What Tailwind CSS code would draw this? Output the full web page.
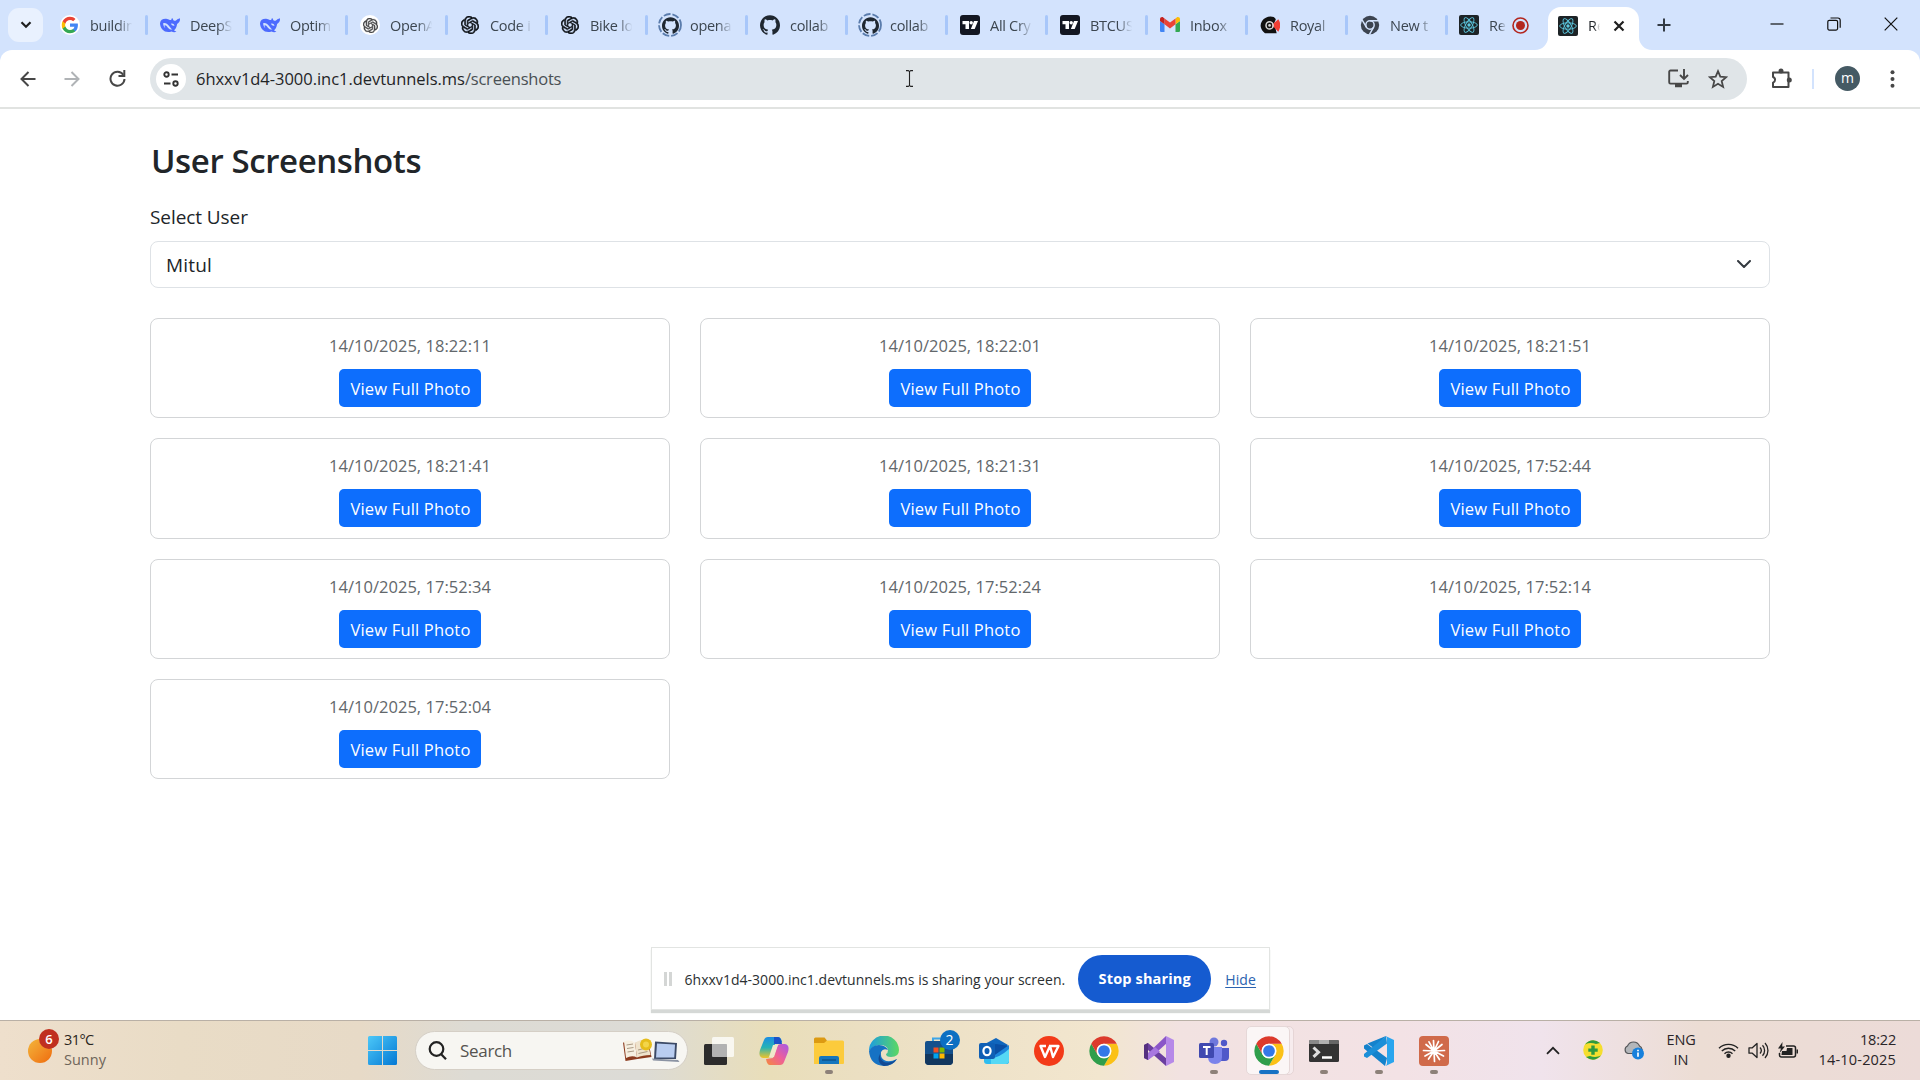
<!DOCTYPE html>
<html lang="en">
<head>
<meta charset="utf-8">
<title>User Screenshots</title>
<script src="https://cdn.jsdelivr.net/npm/@tailwindcss/browser@4"></script>
</head>
<body class="w-[1920px] h-[1080px] overflow-hidden bg-white flex flex-col font-['Open_Sans',sans-serif] text-[#212529]">

<svg class="hidden">
  <symbol id="google" viewBox="0 0 48 48"><path fill="#4285f4" d="M45.1 24.5c0-1.6-.1-3.1-.4-4.5H24v8.500h11.800c-.5 2.800-2.100 5.100-4.400 6.700v5.500h7.100c4.200-3.800 6.600-9.500 6.600-16.200z"/><path fill="#34a853" d="M24 46c5.900 0 10.900-2 14.500-5.300l-7.100-5.500c-2 1.300-4.500 2.100-7.400 2.100-5.700 0-10.600-3.900-12.300-9.100H4.300v5.700C8 41.100 15.400 46 24 46z"/><path fill="#fbbc05" d="M11.700 28.200c-.4-1.300-.7-2.700-.7-4.200s.3-2.900.7-4.200v-5.700H4.300C2.900 17.100 2 20.400 2 24s.9 6.900 2.300 9.900z"/><path fill="#ea4335" d="M24 10.700c3.200 0 6.100 1.100 8.400 3.300l6.300-6.300C34.900 4.200 29.900 2 24 2 15.400 2 8 6.900 4.300 14.100l7.400 5.700c1.700-5.200 6.600-9.100 12.300-9.100z"/></symbol>
  <symbol id="deepseek" viewBox="0 0 24 24"><path fill="#4d6bfe" d="M0 10C.5 5.500 4 4 8.500 4.700c2 .3 3 1.300 4.600 1.300.7 0 .4-1.500 1.400-2.500 1 .5.900 2 1.900 3 1 .8 2.200.5 3.100-.2.900-.8 2.500-1.800 4.500-2.300.2 3.100-.8 5.500-3.500 6.700-.5 3.800-1.900 6.100-3.600 7.600.7.900 1.700 1.200 2.900 1.600-2 1.200-4.300.9-5.900-.1C6.500 22.500.2 17.500 0 10z"/><path fill="#d3e3fd" d="M3.800 9.800c2.700-.8 5 .7 7.100 3.500 1.300 1.800 2.600 3.500 4.100 4.100-2.200.3-4-.5-5.500-2.200-1.500-1.600-1.700-3.100-3.900-3-.3 1.300.1 2.500 1.100 3.500-1.700-.9-3-3.300-2.900-5.900z"/><path fill="#d3e3fd" d="M13 10.500q3-1 4.500 2-2.500 1.200-4.500-2z"/></symbol>
  <symbol id="openai" viewBox="0 0 24 24"><path fill="currentColor" stroke="currentColor" stroke-width=".7" d="M22.2819 9.8211a5.9847 5.9847 0 0 0-.5157-4.9108 6.0462 6.0462 0 0 0-6.5098-2.9A6.0651 6.0651 0 0 0 4.9807 4.1818a5.9847 5.9847 0 0 0-3.9977 2.9 6.0462 6.0462 0 0 0 .7427 7.0966 5.98 5.98 0 0 0 .511 4.9107 6.051 6.051 0 0 0 6.5146 2.9001A5.9847 5.9847 0 0 0 13.2599 24a6.0557 6.0557 0 0 0 5.7718-4.2058 5.9894 5.9894 0 0 0 3.9977-2.9001 6.0557 6.0557 0 0 0-.7475-7.0729zm-9.022 12.6081a4.4755 4.4755 0 0 1-2.8764-1.0408l.1419-.0804 4.7783-2.7582a.7948.7948 0 0 0 .3927-.6813v-6.7369l2.02 1.1686a.071.071 0 0 1 .038.052v5.5826a4.504 4.504 0 0 1-4.4945 4.4944zm-9.6607-4.1254a4.4708 4.4708 0 0 1-.5346-3.0137l.142.0852 4.783 2.7582a.7712.7712 0 0 0 .7806 0l5.8428-3.3685v2.3324a.0804.0804 0 0 1-.0332.0615L9.74 19.9502a4.4992 4.4992 0 0 1-6.1408-1.6464zM2.3408 7.8956a4.485 4.485 0 0 1 2.3655-1.9728V11.6a.7664.7664 0 0 0 .3879.6765l5.8144 3.3543-2.0201 1.1685a.0757.0757 0 0 1-.071 0l-4.8303-2.7865A4.504 4.504 0 0 1 2.3408 7.872zm16.5963 3.8558L13.1038 8.364 15.1192 7.2a.0757.0757 0 0 1 .071 0l4.8303 2.7913a4.4944 4.4944 0 0 1-.6765 8.1042v-5.6772a.79.79 0 0 0-.407-.667zm2.0107-3.0231l-.142-.0852-4.7735-2.7818a.7759.7759 0 0 0-.7854 0L9.409 9.2297V6.8974a.0662.0662 0 0 1 .0284-.0615l4.8303-2.7866a4.4992 4.4992 0 0 1 6.6802 4.66zM8.3065 12.863l-2.02-1.1638a.0804.0804 0 0 1-.038-.0567V6.0742a4.4992 4.4992 0 0 1 7.3757-3.4537l-.142.0805L8.704 5.459a.7948.7948 0 0 0-.3927.6813zm1.0976-2.3654l2.602-1.4998 2.6069 1.4998v2.9994l-2.5974 1.4997-2.6067-1.4997Z"/></symbol>
  <symbol id="github" viewBox="0 0 24 24"><path fill="#1f2730" d="M12 .297c-6.63 0-12 5.373-12 12 0 5.303 3.438 9.8 8.205 11.385.6.113.82-.258.82-.577 0-.285-.01-1.04-.015-2.04-3.338.724-4.042-1.61-4.042-1.61C4.422 18.07 3.633 17.7 3.633 17.7c-1.087-.744.084-.729.084-.729 1.205.084 1.838 1.236 1.838 1.236 1.07 1.835 2.809 1.305 3.495.998.108-.776.417-1.305.76-1.605-2.665-.3-5.466-1.332-5.466-5.93 0-1.31.465-2.38 1.235-3.22-.135-.303-.54-1.523.105-3.176 0 0 1.005-.322 3.3 1.23.96-.267 1.98-.399 3-.405 1.02.006 2.04.138 3 .405 2.28-1.552 3.285-1.23 3.285-1.23.645 1.653.24 2.873.12 3.176.765.84 1.23 1.91 1.23 3.22 0 4.61-2.805 5.625-5.475 5.92.42.36.81 1.096.81 2.22 0 1.606-.015 2.896-.015 3.286 0 .315.21.69.825.57C20.565 22.092 24 17.592 24 12.297c0-6.627-5.373-12-12-12"/></symbol>
  <symbol id="tradingview" viewBox="0 0 20 20"><rect width="20" height="20" rx="3" fill="#131722"/><path fill="#fff" d="M2.500 6h6.500v8H5.500V9.300H2.500zM14 6h4l-3.300 8h-3.800z"/><circle cx="11.200" cy="7.700" r="1.700" fill="#fff"/></symbol>
  <symbol id="gmail" viewBox="0 0 24 24"><path fill="#4285f4" d="M1.600 20.500h3.800v-9.300L0 7.100v11.800c0 .9.700 1.600 1.600 1.600z"/><path fill="#34a853" d="M18.600 20.500h3.800c.9 0 1.600-.7 1.600-1.600V7.100l-5.400 4.100z"/><path fill="#fbbc04" d="M18.600 4.200v7L24 7.100V5c0-2-2.300-3.200-3.900-2z"/><path fill="#ea4335" d="M5.400 11.200v-7L12 9.100l6.600-4.900v7L12 16.100z"/><path fill="#c5221f" d="M0 5v2.100l5.400 4.100v-7L3.900 3C2.300 1.800 0 3 0 5z"/></symbol>
  <symbol id="royal" viewBox="0 0 24 24"><path fill="#111" d="M4 20C-2 14 1 6 7 3.200c4-2 10-2 12 1.800l-2 5 3 12H6z"/><path fill="#ef3e33" d="m14 12 8-7c3 4 3 10 0 15z"/><circle cx="11.500" cy="12.500" r="4.300" fill="none" stroke="#d8d8d8" stroke-width="1.800"/><circle cx="11.500" cy="12.500" r="1.600" fill="#d8d8d8"/></symbol>
  <symbol id="chromegray" viewBox="0 0 48 48"><circle cx="24" cy="24" r="22" fill="#3c4450"/><g fill="none" stroke="#d3e3fd" stroke-width="3.500"><circle cx="24" cy="24" r="10"/><path d="M24 14h21M15.300 29 5 11.500M32.700 29 22.500 47"/></g></symbol>
  <symbol id="react" viewBox="0 0 20 20"><rect width="20" height="20" rx="2" fill="#1d2326"/><g fill="none" stroke="#5cc8e0" stroke-width=".9"><ellipse cx="10" cy="10" rx="8.300" ry="3.200"/><ellipse cx="10" cy="10" rx="8.300" ry="3.200" transform="rotate(60 10 10)"/><ellipse cx="10" cy="10" rx="8.300" ry="3.200" transform="rotate(120 10 10)"/></g><circle cx="10" cy="10" r="1.700" fill="#5cc8e0"/></symbol>
  <symbol id="chrome" viewBox="0 0 48 48"><path fill="#fbc116" d="M24 13H43.050A22 22 0 0 1 24 46L33.530 29.500A11 11 0 0 0 24 13z"/><path fill="#2f9e4b" d="M33.530 29.500 24 46A22 22 0 0 1 4.950 13L14.470 29.500A11 11 0 0 0 33.530 29.500z"/><path fill="#dc3a2c" d="M24 13H43.050A22 22 0 0 0 4.950 13L14.470 29.500A11 11 0 0 1 24 13z"/><circle cx="24" cy="24" r="11" fill="#fff"/><circle cx="24" cy="24" r="8.800" fill="#3478e8"/></symbol>
</svg>

<!-- Tab strip -->
<header class="h-[50px] shrink-0 bg-[#d3e3fd] flex">
  <div class="w-[46px] shrink-0 pl-2 pt-2"><button class="w-[35px] h-[34px] rounded-[11px] bg-[#e9f1fe] flex items-center justify-center"><svg class="w-3 h-2" viewBox="0 0 12 8" fill="none" stroke="#1f1f1f" stroke-width="2.200"><path d="m1.500 1.300 4.500 4.500 4.500-4.500"/></svg></button></div>
  <div id="tabs" class="flex h-[50px]"></div>
  <div class="relative ml-px w-[91px] h-[43px] mt-[7px] shrink-0 rounded-t-[13px] bg-white flex items-center pl-[10px] pb-[6px]">
    <svg class="absolute -left-[13px] bottom-0 size-[13px]" viewBox="0 0 13 13"><path fill="#fff" d="M13 0v13H0A13 13 0 0 0 13 0z"/></svg>
    <svg class="absolute -right-[13px] bottom-0 size-[13px]" viewBox="0 0 13 13"><path fill="#fff" d="M0 0v13h13A13 13 0 0 1 0 0z"/></svg>
    <svg class="size-5 shrink-0"><use href="#react"/></svg>
    <span class="ml-[10px] pt-px w-[12px] overflow-hidden text-[14.5px] [mask-image:linear-gradient(to_right,black_50%,transparent)]">Re</span>
    <svg class="ml-[13px] size-[12px]" viewBox="0 0 12 12" stroke="#1f1f1f" stroke-width="2.200"><path d="m1.500 1.500 9 9m0-9-9 9"/></svg>
  </div>
  <svg class="ml-[18px] mt-[18px] size-[14px]" viewBox="0 0 14 14" stroke="#333b45" stroke-width="2"><path d="M7 .5v13M.5 7h13"/></svg>
  <div class="ml-auto mr-[22px] pt-[17px] flex gap-[43px]">
    <svg class="size-[14px]" viewBox="0 0 14 14" stroke="#111" stroke-width="1.200"><path d="M.5 7h13"/></svg>
    <svg class="size-[14px]" viewBox="0 0 14 14" fill="none" stroke="#111" stroke-width="1.200"><rect x=".8" y="3.300" width="9.800" height="9.800" rx="1.500"/><path d="M3.500 1h7.400a2.300 2.300 0 0 1 2.300 2.300v7.400"/></svg>
    <svg class="size-[14px]" viewBox="0 0 14 14" stroke="#111" stroke-width="1.200"><path d="m.7.7 12.600 12.600m0-12.600L.7 13.300"/></svg>
  </div>
</header>

<!-- Toolbar -->
<div class="shrink-0 bg-[#d3e3fd]">
<div class="h-[59px] bg-white rounded-t-[12px] border-b-2 border-[#e1e3e1] flex items-center">
  <svg class="ml-[20px] size-[16px]" viewBox="0 0 16 16" fill="none" stroke="#474747" stroke-width="2"><path d="M15.500 8H1.500M8.500 1 1.500 8l7 7"/></svg>
  <svg class="ml-[28px] size-[16px]" viewBox="0 0 16 16" fill="none" stroke="#b0b3b6" stroke-width="2"><path d="M.5 8h14M7.500 1l7 7-7 7"/></svg>
  <svg class="ml-[29px] size-[17px]" viewBox="0 0 17 17" fill="none" stroke="#474747" stroke-width="2"><path d="M14.300 4.800A7 7 0 1 0 15.500 9"/><path d="M15.300 0v6H9.500"/></svg>
  <div class="ml-[24px] w-[1597px] h-[42px] rounded-full bg-[#e0e5e8] flex items-center">
    <span class="ml-[6px] size-[30px] rounded-full bg-white flex items-center justify-center"><svg class="size-[16px]" viewBox="0 0 16 16" fill="none" stroke="#333" stroke-width="1.900"><circle cx="3.500" cy="3.500" r="2.200"/><path d="M8.500 3.500H15M1 12.500h6.500"/><circle cx="12.500" cy="12.500" r="2.200"/></svg></span>
    <div class="ml-[10px] pt-[2px] text-[16.5px] whitespace-nowrap text-[#1f2426] tracking-[-0.002em]">6hxxv1d4-3000.inc1.devtunnels.ms<span class="text-[#4a5054] tracking-[-0.013em]">/screenshots</span></div>
    <svg class="ml-[344px] w-[9px] h-[17px]" viewBox="0 0 9 17" fill="none" stroke="#222" stroke-width="1.100"><path d="M1 .6h2.300l1.200 1 1.200-1H8M4.500 1.500v14M1 16.400h2.300l1.200-1 1.200 1H8"/></svg>
    <svg class="ml-auto w-[21px] h-[19px]" viewBox="0 0 21 19" fill="none" stroke="#474747" stroke-width="1.900"><path d="M10 1.500H2.500a1.300 1.300 0 0 0-1.300 1.300v10.500c0 .7.600 1.300 1.300 1.300h16c.7 0 1.300-.6 1.300-1.300V12"/><path d="M16 0v9.500M12 6l4 4 4-4"/><path stroke-width="3.500" d="M7 16.500h7"/></svg>
    <svg class="ml-[19px] mr-[19px] size-[20px]" viewBox="0 0 20 20" fill="none" stroke="#474747" stroke-width="1.800"><path d="m10 2.200 2.300 5.500 5.900.5-4.500 3.900 1.400 5.800-5.100-3.100-5.100 3.100 1.400-5.800-4.500-3.900 5.900-.5z"/></svg>
  </div>
  <svg class="ml-[24px] size-[21px]" viewBox="0 0 21 21"><path fill="none" stroke="#474747" stroke-width="2" stroke-linejoin="round" d="M2 4.500h15.500v14.500H2v-4.300a3 3 0 0 0 0-5.700z"/><circle cx="10" cy="3" r="2.500" fill="#474747"/><circle cx="18.300" cy="12" r="2.500" fill="#474747"/></svg>
  <span class="ml-[20px] w-[2px] h-[20px] bg-[#d3e3fd]"></span>
  <span class="ml-[21px] size-[25px] rounded-full bg-[#455a64] text-white text-[14px] leading-[23px] text-center">m</span>
  <svg class="ml-[30px] w-[5px] h-[18px]" viewBox="0 0 5 18" fill="#474747"><circle cx="2.500" cy="2.200" r="2"/><circle cx="2.500" cy="9" r="2"/><circle cx="2.500" cy="15.800" r="2"/></svg>
</div>
</div>

<!-- Page -->
<main class="flex-1 min-h-0 flex flex-col px-[150px] pt-[31px]">
  <h3 class="pl-px text-[33px] leading-[42px] font-semibold tracking-[-0.012em]">User Screenshots</h3>
  <label class="mt-[20px] text-[19px] leading-[30px] tracking-[-0.004em]">Select User</label>
  <div class="mt-[9px] h-[47px] rounded-[8px] border border-[#dee2e6] flex items-center justify-between pl-[15px] pr-[18px] pt-px text-[19px] tracking-[0.009em] shrink-0">Mitul<svg class="w-[14px] h-[8px] -mt-[3px]" viewBox="0 0 14 8" fill="none" stroke="#343a40" stroke-width="2" stroke-linecap="round" stroke-linejoin="round"><path d="m1 1 6 6 6-6"/></svg></div>
  <div id="cards" class="mt-[30px] grid grid-cols-3 gap-x-[30px] gap-y-[20px]"></div>
  <div class="mt-auto mb-[10px] self-center w-[619px] h-[63px] shrink-0 bg-white border border-[#e2e4e2] shadow-[0_3px_1px_#d5d8d6] flex items-center text-[14px] text-[#2b2f31]">
    <span class="ml-[12px] w-[8px] h-[14px] border-x-[3px] border-[#d4d6d5]"></span>
    <span class="ml-[13px] pt-px whitespace-nowrap tracking-[0.002em]">6hxxv1d4-3000.inc1.devtunnels.ms is sharing your screen.</span>
    <button class="ml-[13px] pt-px w-[133px] h-[48px] rounded-full bg-[#155bd0] text-white font-bold text-[14.5px] tracking-[0.01em]">Stop sharing</button>
    <span class="ml-[14px] pt-px text-[#2a62b0] underline underline-offset-2 tracking-[0.01em]">Hide</span>
  </div>
</main>

<!-- Taskbar -->
<footer class="h-[60px] shrink-0 border-t border-[#b9b0a6] flex items-center bg-[linear-gradient(90deg,#eedfcc_0px,#e9dcc6_180px,#e7dac7_360px,#dddbd4_470px,#dcdbd6_640px,#e9deb9_770px,#ebdfc2_860px,#f2e6cf_1100px,#f2e2e1_1180px,#f3e2e5_1400px,#f0e3ec_1540px,#ecddd4_1700px,#ecdbd8_1920px)]">
  <div class="w-[368px] shrink-0 flex items-center text-[14.5px] leading-[20px]">
    <div class="relative ml-[28px] size-[24px] rounded-full bg-linear-to-br from-[#f2b53a] to-[#ee6a0a]"><span class="absolute left-[11px] -top-[10px] size-[20px] rounded-full bg-[#c0301f] text-white text-[13px] leading-[20px] text-center font-semibold">6</span></div>
    <div class="ml-[12px] -mt-[2px] text-[#2a2520]"><div class="tracking-[-0.04em]">31°C</div><div class="text-[#6f655a]">Sunny</div></div>
  </div>
  <svg class="size-[29px]" viewBox="0 0 29 29"><defs><linearGradient id="win" x1="0" y1="0" x2="29" y2="29" gradientUnits="userSpaceOnUse"><stop stop-color="#4cc8f8"/><stop offset="1" stop-color="#0478d4"/></linearGradient></defs><path fill="url(#win)" d="M1.500 0H14v14H0V1.500Q0 0 1.500 0zM15 0h12.500Q29 0 29 1.500V14H15zM0 15h14v14H1.500Q0 29 0 27.500zM15 15h14v12.500q0 1.500-1.500 1.500H15z"/></svg>
  <div class="ml-[18px] w-[273px] h-[39px] shrink-0 rounded-full border border-[#d5cfc6] bg-[#f7f6f2] flex items-center">
    <svg class="ml-[12px] size-[19px]" viewBox="0 0 19 19" fill="none" stroke="#222" stroke-width="2.200"><circle cx="8.500" cy="8" r="6.800"/><path d="m13.200 13.200 4.800 5"/></svg>
    <span class="ml-[13px] text-[17px] tracking-[-0.018em] text-[#55534f]">Search</span>
    <svg class="ml-auto mr-[7px] w-[58px] h-[25px]" viewBox="0 0 58 25"><path fill="#8c3b1e" d="m1 4.500 2.500 18.500 12-2 14-2L26 2 13 5z"/><path fill="#f6efe0" d="M2 3.500Q8 1 13 5l2 14.500q-5-2.500-11 .5z"/><path fill="#efe3cc" d="M13 5q5-4 12-3.500L28.500 17q-8 0-13.500 2.500z"/><path stroke="#a08f78" stroke-width=".9" d="m4.500 7 6.500-1M5 10.500l6.500-1M5.500 14l6.500-1m4-1 8-2m-7.500 5.500 9-2"/><circle cx="24" cy="6.500" r="6" fill="#e6bd1c"/><circle cx="24" cy="6.500" r="3" fill="#f3d54a"/><path fill="#3c4a66" d="m33 3.500 22 1.500-1 16H32z"/><path fill="#b9cdf0" d="m35 5.500 18 1-.8 13H34z"/><path fill="#8b93a3" d="m30 20.500 26 1.500 1.500 2L31 22.500z"/></svg>
  </div>
  <div id="apps" class="ml-[3px] flex h-[59px]"></div>
  <div class="ml-auto -mt-px flex items-center text-[14.5px] leading-[20px] text-[#2a2528]">
    <svg class="w-[14px] h-[9px]" viewBox="0 0 14 9" fill="none" stroke="#222" stroke-width="1.800"><path d="m1 7.800 6-6 6 6"/></svg>
    <svg class="ml-[23px] size-[20px]" viewBox="0 0 20 20"><circle cx="10" cy="10" r="9.800" fill="#f5de2e"/><path fill="#2e9a3e" d="M2 4.500Q9-3 17 3l-4 1Q7 2 2 4.500zM18 15.500q-7 7.500-15 1.500l4-1q6 2 11-.5zM8.300 5.500h3.400v3h3v3.300h-3v3H8.300v-3h-3V8.500h3z"/></svg>
    <svg class="ml-[20px] w-[21px] h-[20px]" viewBox="0 0 21 20"><path fill="#b3b6ba" stroke="#55575a" stroke-width="1.200" d="M5 13.500a4 4 0 0 1-.5-7.500 6.500 6.500 0 0 1 12 0 4.500 4.500 0 0 1 1 7.500z"/><circle cx="15" cy="13.500" r="6" fill="#1780dc"/><path stroke="#fff" stroke-width="1.700" d="M15 12.500v4.200m0-7v1.600"/></svg>
    <div class="ml-[22px] w-[30px] text-center"><div class="tracking-[-0.012em]">ENG</div><div>IN</div></div>
    <svg class="ml-[22px] w-[21px] h-[16px]" viewBox="0 0 21 16" fill="none" stroke="#222" stroke-width="1.400"><path d="M1 6.300a13.500 13.500 0 0 1 19 0M3.800 9a9.500 9.500 0 0 1 13.400 0M6.500 11.700a5.700 5.700 0 0 1 8 0"/><circle cx="10.500" cy="13.800" r="1.500" fill="#222"/></svg>
    <svg class="ml-[9px] w-[21px] h-[17px]" viewBox="0 0 21 17" fill="none" stroke="#222" stroke-width="1.300"><path stroke-linejoin="round" d="M1 5.800h3.300L9 1.500v14l-4.700-4.300H1zM12 5.500a4.500 4.500 0 0 1 0 6M14.500 3.300a7.500 7.500 0 0 1 0 10.400M17 1a11 11 0 0 1 0 15"/></svg>
    <svg class="ml-[9px] w-[21px] h-[17px]" viewBox="0 0 21 17"><path fill="none" stroke="#222" stroke-width="1.500" d="M8 4h7.500a2 2 0 0 1 2 2v7a2 2 0 0 1-2 2h-12a2 2 0 0 1-2-2v-2"/><path fill="#222" d="M18.500 7.500h1.500v4h-1.500zM4 9h4.500L9 6h5.500v7H3.500zM4.500 0 0 6.500h3L1.500 11 7 4.500H4.200z"/></svg>
    <div class="ml-[19px] mr-[24px] w-[78px] text-right"><div class="tracking-[-0.014em]">18:22</div><div class="tracking-[0.012em]">14-10-2025</div></div>
  </div>
</footer>

<script>
const icon = (id, extra = '') => `<svg class="size-5 shrink-0 ${extra}"><use href="#${id}"/></svg>`;
const ring = `<span class="relative size-5 shrink-0 flex items-center justify-center"><svg class="absolute -inset-[2px] size-6" viewBox="0 0 24 24"><circle cx="12" cy="12" r="11" fill="none" stroke="#5a7cac" stroke-width="1.800" stroke-dasharray="7 2"/></svg><svg class="size-[17px]"><use href="#github"/></svg></span>`;
const disc = (inner) => `<span class="size-5 shrink-0 rounded-full bg-white flex items-center justify-center">${inner}</span>`;
const tabs = [
  [disc('<svg class="size-[18px]"><use href="#google"/></svg>'), 'buildin'],
  [icon('deepseek'), 'DeepS'], [icon('deepseek'), 'Optim'],
  [disc('<svg class="size-[15px] text-[#444]"><use href="#openai"/></svg>'), 'OpenA'],
  [icon('openai', 'scale-90 text-[#0d1116]'), 'Code i'], [icon('openai', 'scale-90 text-[#0d1116]'), 'Bike lo'],
  [ring, 'opena'], [icon('github'), 'collab'], [ring, 'collab'],
  [icon('tradingview'), 'All Cry'], [icon('tradingview'), 'BTCUS'],
  [icon('gmail'), 'Inbox'], [icon('royal'), 'Royal'], [icon('chromegray'), 'New t'],
];
document.getElementById('tabs').innerHTML = tabs.map(([i, t]) => `
  <div class="w-[100px] h-[50px] flex items-center pl-[14px]">${i}
    <span class="ml-[10px] pt-px w-[46px] whitespace-nowrap text-[14.5px] tracking-[-0.02em] text-[#3c4650] [mask-image:linear-gradient(to_right,black_60%,transparent_92%)]">${t}</span>
    <span class="ml-auto -mr-[2px] w-[3px] h-[20px] rounded-full bg-[#a8c7fa]"></span>
  </div>`).join('') + `
  <div class="w-[101px] h-[50px] flex items-center pl-[13px]">${icon('react')}
    <span class="ml-[10px] pt-px w-[17px] whitespace-nowrap text-[14.5px] tracking-[-0.02em] text-[#3c4650] [mask-image:linear-gradient(to_right,black_60%,transparent)]">Re</span>
    <svg class="ml-[6px] size-[17px]" viewBox="0 0 17 17"><circle cx="8.500" cy="8.500" r="7.500" fill="none" stroke="#b3261e" stroke-width="1.600"/><circle cx="8.500" cy="8.500" r="4.500" fill="#b3261e"/></svg>
  </div>`;

const times = ['18:22:11', '18:22:01', '18:21:51', '18:21:41', '18:21:31', '17:52:44', '17:52:34', '17:52:24', '17:52:14', '17:52:04'];
document.getElementById('cards').innerHTML = times.map(t => `
  <div class="h-[100.300px] rounded-[8px] border border-[#d3d5d7] flex flex-col items-center pt-[14px]">
    <div class="text-[16.5px] leading-[26px] tracking-[0.002em] text-[#62676b]">14/10/2025, ${t}</div>
    <button class="mt-[10px] w-[142px] h-[38px] rounded-[5px] bg-[#0d6efd] text-white text-[16.5px] leading-[38px] pt-px pl-px tracking-[0.011em]">View Full Photo</button>
  </div>`).join('');

const chrome = '<svg class="size-[32px]"><use href="#chrome"/></svg>';
const svg = (body) => `<svg class="size-[30px]" viewBox="0 0 30 30">${body}</svg>`;
const apps = [
  [svg('<rect x="0" y="8" width="23" height="21" rx="1.500" fill="#2c2c2c"/><rect x="8" y="1" width="22" height="20" rx="1.500" fill="#fff" fill-opacity=".75"/><rect x="8" y="8" width="15" height="13" fill="#999" fill-opacity=".5"/>')],
  [svg('<defs><linearGradient id="c1" x1="0" y1="0" x2="0" y2="1"><stop stop-color="#1b8de4"/><stop offset=".5" stop-color="#27b3b5"/><stop offset="1" stop-color="#f0c428"/></linearGradient><linearGradient id="c2" x1="1" y1="0" x2="0" y2="1"><stop stop-color="#a45ae8"/><stop offset=".5" stop-color="#ee5f9a"/><stop offset="1" stop-color="#f58a3c"/></linearGradient></defs><path fill="url(#c1)" d="M9 1h10q3 0 4 5l-7 2-4 11q-1 3-4 3H4q-5-1-3-8L5 4q1-3 4-3z"/><path fill="#1c52c8" d="M15 1h4q3 0 4 7h-8z"/><path fill="url(#c2)" d="M21 29H11q-3 0-4-6l7-1 4-11q1-3 4-3h4q5 1 3 8l-4 10q-1 3-4 3z"/><path fill="#f0e8cc" d="m14 9-4 12h5l4-12z"/>'), 0],
  [svg('<path fill="#dc9a12" d="M0 3q0-1.500 1.500-1.500h9L13 4.500v4H0z"/><path fill="#fccb3c" d="M0 7h10l3-2.500h15.500Q30 4.500 30 6v21q0 1-1 1H0z"/><path fill="#1576bd" d="M5 28v-6q0-2 2-2h16q2 0 2 2v6z"/><path stroke="#0c4f86" stroke-width="1.300" d="M8 24h14"/>'), 1],
  [svg('<defs><linearGradient id="e1"><stop stop-color="#1c9de0"/><stop offset="1" stop-color="#5bd862"/></linearGradient></defs><path fill="url(#e1)" d="M0 15A15 15 0 0 1 30 14q0 7-8 7-5 0-5-3 2-1 2-4-1-5-8-5-7 0-11 6z"/><path fill="#1672c4" d="M0 15q3-6 10-6 7 .5 9 5-5-2-7 2-1 5 3 8 5 3 13-1-4 7-13 7Q1 29 0 15z"/><path fill="#124a94" d="M12 16q-3 6 3 10 6 2 13-3-5 7-13 7Q6 26 12 16z"/>')],
  [`<span class="relative">${svg('<path fill="none" stroke="#3da5e8" stroke-width="2" d="M9 7V2.500h12V7"/><path fill="#14508c" d="M1 7q0-2 2-2h24q2 0 2 2v18q0 4-4 4H5q-4 0-4-4z"/><path fill="#12375f" d="M1 18h28v7q0 4-4 4H5q-4 0-4-4z"/><path fill="#f25022" d="M9.500 11.500h5v5h-5z"/><path fill="#7fba00" d="M15.500 11.500h5v5h-5z"/><path fill="#00a4ef" d="M9.500 17.500h5v5h-5z"/><path fill="#ffb900" d="M15.500 17.500h5v5h-5z"/>')}<span class="absolute left-[16px] -top-[6px] size-[20px] rounded-full bg-[#0c6fc2] text-white text-[14px] leading-[19px] text-center">2</span></span>`],
  [svg('<path fill="#1066bd" d="M4 9 17 2l12 7-12 14z"/><path fill="#2fbdf0" d="M5 12h25v13q0 3-3 3H8q-3 0-3-3z"/><path fill="#0a4fa5" d="m5 12 12-4 13 2-14 12H5z"/><path fill="#1c86dc" d="m13 21 17-12v16q0 3-3 3h-8z"/><path fill="#55d8f5" d="M12 22q8 0 18-9v12q0 3-3 3H12z"/><rect y="7" width="16" height="16" rx="2" fill="#0f5fb5"/><ellipse cx="8" cy="15" rx="3.600" ry="4.200" fill="none" stroke="#fff" stroke-width="2.200"/>')],
  [svg('<circle cx="15" cy="15" r="15" fill="#f33a18"/><path fill="none" stroke="#fff" stroke-width="2.400" stroke-linejoin="round" d="M12 10H6.500L11 21l5-11 3 11 5.500-11H18l-3 0"/>')],
  [chrome],
  [svg('<path fill="#8b56c8" d="m0 21 22-21 1 7L4 24l-4-2z"/><path fill="#6b3fa0" d="M0 9l4-2 19 16-1 7L4 14z"/><path fill="#a877e0" d="M0 21 11 11l5 4.500L4 24z"/><path fill="#b689e8" d="m22 0 8 4v22l-8 4z"/><path fill="#563080" d="M0 9l4-2v17l-4-2z"/>')],
  [svg('<circle cx="15" cy="6" r="4.500" fill="#6f78dc"/><circle cx="25" cy="7" r="3.200" fill="#5059c9"/><path fill="#5059c9" d="M21 12h9v9q0 4-4 4h-5z"/><path fill="#7b83eb" d="M9 11h14v10q0 7-7 7t-7-7z"/><rect y="7" width="15" height="15" rx="1.500" fill="#4049b0"/><path stroke="#fff" stroke-width="2" d="M4 11h7.500M7.700 11v8"/>'), 1],
  [chrome, 2],
  [svg('<rect y="4" width="30" height="22" rx="1.500" fill="#333"/><path fill="#888" d="M0 8V5.500Q0 4 1.500 4H10v4z"/><path fill="#b0b0b0" d="M10 4h10v4H10z"/><path fill="#666" d="M20 4h8.500Q30 4 30 5.500V8H20z"/><path fill="none" stroke="#ddd" stroke-width="3" d="m4.500 11.500 5 4.700-5 4.700"/><path stroke="#fff" stroke-width="2.500" d="M13 21.500h10"/>'), 1],
  [svg('<path fill="#1482cc" d="M22 0 9 12.500 3 8 0 9.500v3L21 30l2-8L3.500 7.500z"/><path fill="#1b8fd8" d="M22 0 0 18v2.500L3 22 23 7.500z"/><path fill="#29a5ee" d="m21.500 0 8.500 4v22l-8.500 4q1.500-1 1.500-3V3q0-2-1.500-3z"/>'), 1],
  [svg('<rect width="30" height="30" rx="4" fill="#d06a4a"/><path stroke="#fff" stroke-width="1.700" stroke-linecap="round" d="M15 15 14.500 4.500M15 15l4.500-9.500M15 15l8-6.500M15 15l10.500-.5M15 15l9.500 5M15 15l5.500 8.500M15 15l.5 10.500M15 15 9.500 23M15 15l-9 5M15 15 4.500 14.500M15 15 7 8.500M15 15 10 5.800"/>'), 1],
];
document.getElementById('apps').innerHTML = apps.map(([i, s]) => `
  <div class="relative w-[55px] flex items-center justify-center">
    ${s === 2 ? '<span class="absolute left-[8px] top-[5px] w-[45px] h-[49px] rounded-[5px] border border-[#e6d5d6] bg-[#f7ecee]"></span><span class="absolute left-[5px] top-[5px] w-[44px] h-[49px] rounded-[5px] border border-[#e6d8d8] bg-[#fbf6f6]"></span>' : ''}
    <span class="relative">${i.replace('<svg class="', '<svg class="block ')}</span>
    ${s === 1 ? '<span class="absolute bottom-[6px] w-[8px] h-[4px] rounded-full bg-[#8d8179]"></span>' : ''}
    ${s === 2 ? '<span class="absolute bottom-[6px] w-[20px] h-[4px] rounded-full bg-[#1672c4]"></span>' : ''}
  </div>`).join('');
</script>
</body>
</html>
